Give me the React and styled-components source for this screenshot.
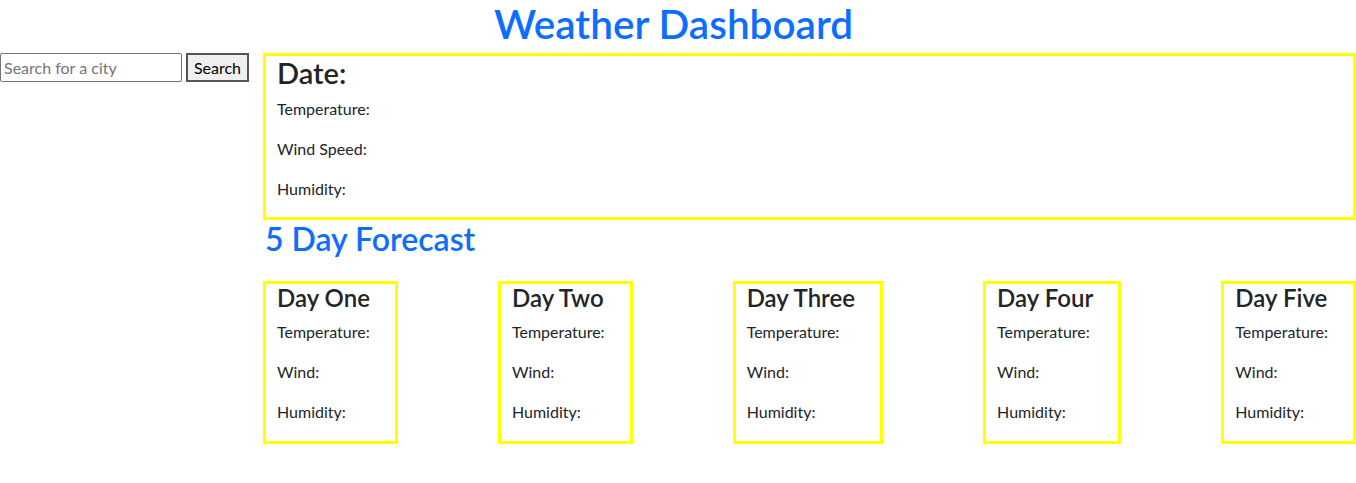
import React from "react";
import styled, { createGlobalStyle } from "styled-components";

const GlobalStyle = createGlobalStyle`
  *, *::before, *::after { box-sizing: border-box; }
  body {
    margin: 0;
    font-family: "Segoe UI", Lato, "Open Sans", sans-serif;
    font-size: 16px;
    line-height: 1.5;
    color: #212529;
    background: #ffffff;
  }
`;

const Title = styled.h1`
  margin: 0 0 5px;
  padding-right: 9px;
  text-align: center;
  font-size: 40.5px;
  font-weight: 600;
  line-height: 48px;
  color: #0d6efd;
`;

const Layout = styled.div`
  display: flex;
  align-items: flex-start;
`;

const Sidebar = styled.aside`
  width: 263px;
  flex-shrink: 0;
  display: flex;
  gap: 4px;
`;

const SearchInput = styled.input`
  width: 182px;
  height: 29px;
  padding: 1px 3px;
  border: 1px solid #767676;
  border-radius: 2px;
  font-family: inherit;
  font-size: 16px;
  color: #212529;
  &::placeholder { color: #757575; }
`;

const SearchButton = styled.button`
  width: 63px;
  height: 29px;
  padding: 0;
  border: 2px solid #555;
  background: #efefef;
  font-family: inherit;
  font-size: 16px;
  color: #000;
`;

const Main = styled.main`
  flex: 1;
  min-width: 0;
`;

// yellow outlined box used for today and each forecast day
const Panel = styled.section`
  border: 3px solid #ffff00;
  padding: ${(p) => (p.$compact ? "0 25px 1px 11px" : "0 11px")};
`;

const PanelHeading = styled.h2`
  margin: ${(p) => (p.$small ? "0 0 7px" : "0 0 6px")};
  font-size: ${(p) => (p.$small ? "24px" : "29px")};
  font-weight: 600;
  line-height: 1.2;
`;

const Stat = styled.p`
  margin: 0 0 16px;
`;

const SectionTitle = styled.h2`
  margin: 0 0 23px;
  padding-left: 2px;
  font-size: 32px;
  font-weight: 600;
  line-height: 1.2;
  color: #0d6efd;
`;

const ForecastRow = styled.div`
  display: flex;
  justify-content: space-between;
`;

const days = ["Day One", "Day Two", "Day Three", "Day Four", "Day Five"];

function App() {
  return (
    <>
      <GlobalStyle />
      <Title>Weather Dashboard</Title>
      <Layout>
        <Sidebar>
          <SearchInput type="text" placeholder="Search for a city" />
          <SearchButton>Search</SearchButton>
        </Sidebar>
        <Main>
          <Panel>
            <PanelHeading>Date:</PanelHeading>
            <Stat>Temperature:</Stat>
            <Stat>Wind Speed:</Stat>
            <Stat>Humidity:</Stat>
          </Panel>
          <SectionTitle>5 Day Forecast</SectionTitle>
          <ForecastRow>
            {days.map((day) => (
              <Panel key={day} $compact>
                <PanelHeading $small>{day}</PanelHeading>
                <Stat>Temperature:</Stat>
                <Stat>Wind:</Stat>
                <Stat>Humidity:</Stat>
              </Panel>
            ))}
          </ForecastRow>
        </Main>
      </Layout>
    </>
  );
}

export default App;
